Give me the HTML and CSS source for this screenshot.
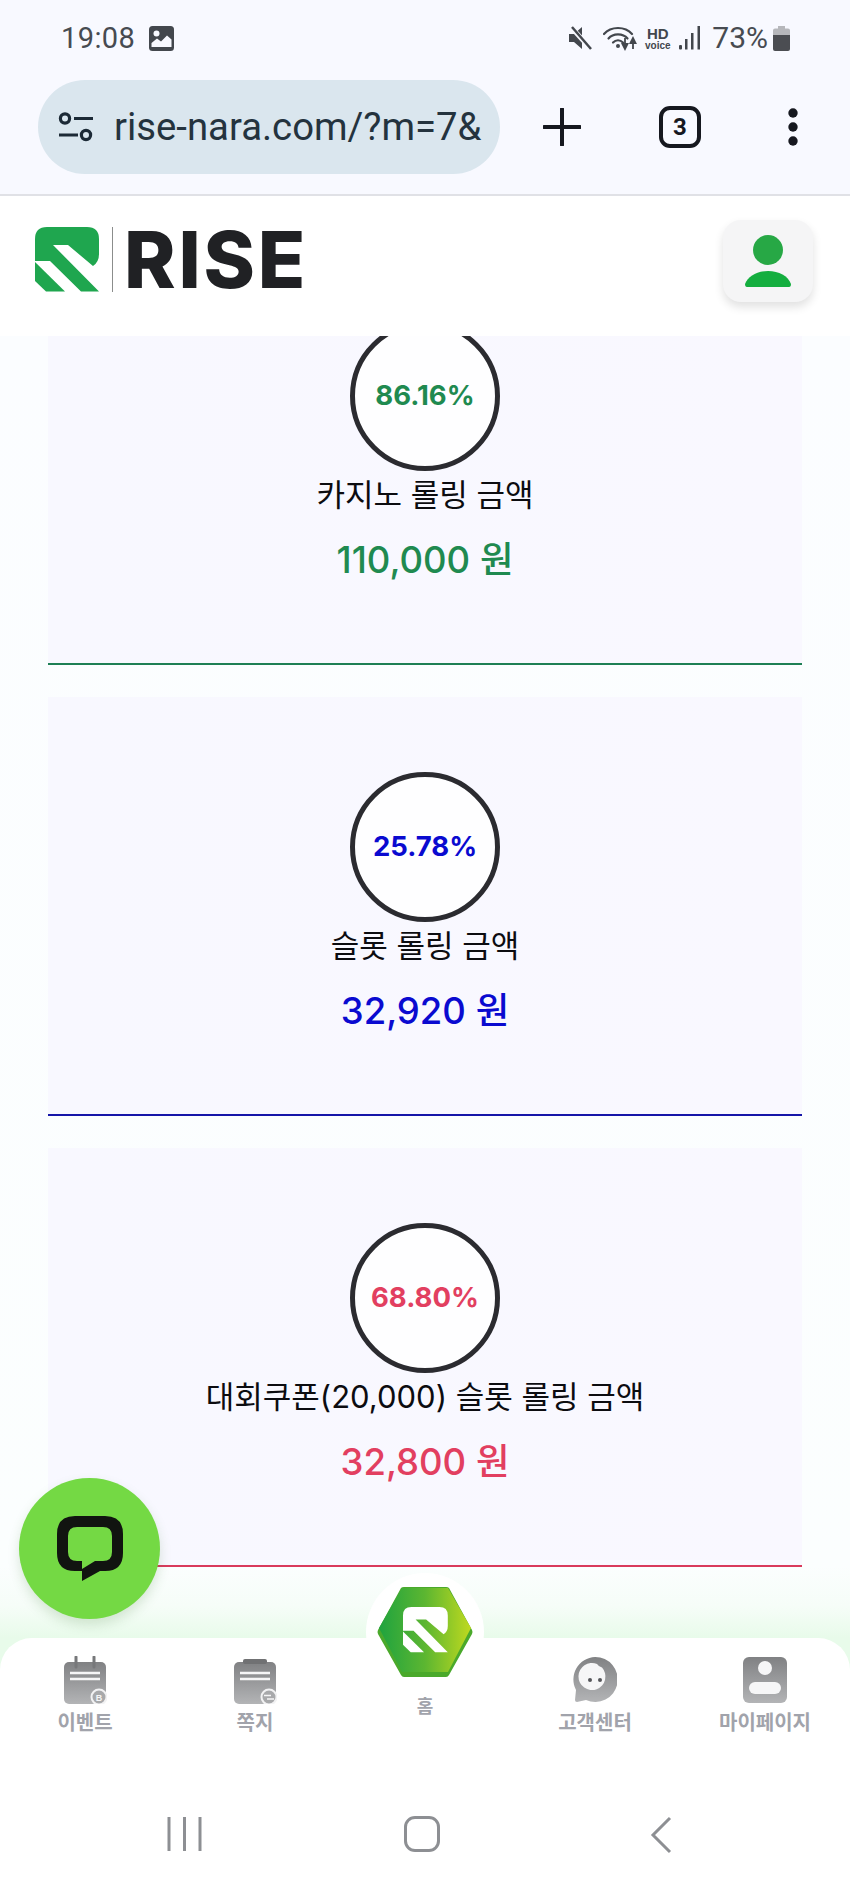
FILE: index.html
```html
<!DOCTYPE html>
<html lang="ko">
<head>
<meta charset="utf-8">
<title>RISE</title>
<link rel="stylesheet" href="styles.css">
</head>
<body>
<div class="page">
  <div class="chrome">
    <div class="status">
      <div class="status-left">
        <span class="time">19:08</span>
        <svg class="ic-image" viewBox="0 0 25 25"><rect width="25" height="25" rx="3.5" fill="#43474d"/><circle cx="7.5" cy="7.5" r="3" fill="#f8f9ff"/><path d="M2.5 21V17L8 12.5l4 3 6-6 4.5 4V21Z" fill="#f8f9ff"/></svg>
      </div>
      <div class="status-right">
        <svg class="ic-mute" viewBox="0 0 24 24"><path d="M1 8h5l8-7v22l-8-7H1Z" fill="#43474d"/><path d="M3 1l20 22" stroke="#f8f9ff" stroke-width="5"/><path d="M4 1l19 22" stroke="#43474d" stroke-width="2.5"/></svg>
        <svg class="ic-wifi" viewBox="0 0 34 25"><g fill="none" stroke="#43474d" stroke-width="2.2" stroke-linecap="round"><path d="M1 8C8 0 22 0 29 8"/><path d="M5.500 12.500C10 7 20 7 24.500 12.500"/><path d="M10 16.500C13 13.500 17 13.500 20 16.500"/></g><circle cx="15" cy="20" r="2" fill="#43474d"/><path d="M22 12v9M19.500 18l2.500 5 2.500-5ZM30 23v-9M27.500 17l2.500-5 2.500 5Z" stroke="#43474d" stroke-width="1.800" fill="#43474d"/></svg>
        <span class="hd"><b>HD</b><i>voice</i></span>
        <svg class="ic-signal" viewBox="0 0 22 24"><g fill="#43474d"><rect x="0" y="19" width="3" height="4.500" rx="1"/><rect x="6" y="13" width="2.500" height="10.500"/><rect x="12" y="7" width="2.500" height="16.500"/><rect x="18.500" y="0" width="2.500" height="23.500"/></g></svg>
        <span class="battery-pct">73%</span>
        <svg class="ic-battery" viewBox="0 0 17 25"><path d="M5 0h7v2.500h3a2 2 0 0 1 2 2V9H0V4.500a2 2 0 0 1 2-2h3Z" fill="#b6b7bb"/><path d="M0 9h17v14a2 2 0 0 1-2 2H2a2 2 0 0 1-2-2Z" fill="#4b4d52"/></svg>
      </div>
    </div>
    <div class="toolbar">
      <div class="url-pill">
        <svg class="ic-tune" viewBox="0 0 36 30"><g fill="none" stroke="#1c2a36" stroke-width="3.200"><circle cx="7" cy="6.500" r="4.600"/><circle cx="28" cy="23" r="4.600"/></g><path d="M16 6.500h19M1 23h19" stroke="#1c2a36" stroke-width="3.200"/></svg>
        <span class="url">rise-nara.com/?m=7&amp;</span>
      </div>
      <svg class="ic-plus" viewBox="0 0 38 38"><path d="M19 1v36M1 19h36" stroke="#16181f" stroke-width="4" stroke-linecap="round"/></svg>
      <div class="tabs">3</div>
      <svg class="ic-dots" viewBox="0 0 10 38"><g fill="#16181f"><circle cx="5" cy="5" r="4.700"/><circle cx="5" cy="19" r="4.700"/><circle cx="5" cy="33" r="4.700"/></g></svg>
    </div>
  </div>

  <header class="site-header">
    <div class="logo">
      <svg class="logo-mark" viewBox="0 0 64 65"><path d="M12 0H52Q64 0 64 12V27Q64 35 58 39L33 18H18L64 64.500H46L15 34H0V12Q0 0 12 0Z" fill="#1fa64f"/><path d="M0 35L30 64.500H11L0 54Z" fill="#1fa64f"/></svg>
      <span class="logo-sep"></span>
      <span class="logo-word">RISE</span>
    </div>
    <button class="user-btn" type="button" aria-label="내 정보">
      <svg viewBox="0 0 46 52"><circle cx="23" cy="15" r="15" fill="#27a845"/><path d="M0 49C3 41 12 36 23 36S43 41 46 49Q46 52 44 52H2Q0 52 0 49Z" fill="#14ae3f"/></svg>
    </button>
  </header>

  <main class="content">
    <section class="card card-green">
      <div class="ring">86.16%</div>
      <p class="label">카지노 롤링 금액</p>
      <p class="amount">110,000 원</p>
    </section>
    <section class="card card-blue">
      <div class="ring">25.78%</div>
      <p class="label">슬롯 롤링 금액</p>
      <p class="amount">32,920 원</p>
    </section>
    <section class="card card-red">
      <div class="ring">68.80%</div>
      <p class="label">대회쿠폰(20,000) 슬롯 롤링 금액</p>
      <p class="amount">32,800 원</p>
    </section>
  </main>

  <button class="chat-fab" type="button" aria-label="채팅">
    <svg viewBox="0 0 66 66"><path fill-rule="evenodd" d="M18 0H48Q66 0 66 18V37Q66 55 48 55H43L25 65V55H18Q0 55 0 37V18Q0 0 18 0ZM20 11Q11 11 11 20V36Q11 45 20 45H25V53L38 45H46Q55 45 55 36V20Q55 11 46 11Z" fill="#111410"/></svg>
  </button>

  <nav class="bottom-nav">
    <div class="nav-items">
      <a class="nav-item">
        <svg class="nav-icon" viewBox="0 0 44 48"><defs><linearGradient id="g1" x1="0" y1="0" x2="0" y2="1"><stop offset="0" stop-color="#808183"/><stop offset="1" stop-color="#b3b4b6"/></linearGradient></defs><rect x="1" y="6" width="42" height="42" rx="5" fill="url(#g1)"/><path d="M13 1v10M31 1v10" stroke="#77787a" stroke-width="3" stroke-linecap="round"/><path d="M7 17h30M7 23h30" stroke="#f6f6f7" stroke-width="2.500"/><circle cx="36" cy="41" r="7.500" fill="#a8a9ab" stroke="#f2f2f3" stroke-width="2"/><text class="badge-b" x="36" y="44.500" text-anchor="middle">B</text></svg>
        <span>이벤트</span>
      </a>
      <a class="nav-item">
        <svg class="nav-icon" viewBox="0 0 44 48"><rect x="1" y="6" width="42" height="42" rx="5" fill="url(#g1)"/><rect x="10" y="3" width="24" height="5" rx="2" fill="#707173"/><path d="M7 17h30M7 23h30" stroke="#f6f6f7" stroke-width="2.500"/><circle cx="36" cy="41" r="7.500" fill="#a8a9ab" stroke="#f2f2f3" stroke-width="2"/><path d="M31 39.500h7M34 43h7" stroke="#f6f6f7" stroke-width="1.500"/></svg>
        <span>쪽지</span>
      </a>
      <a class="nav-item nav-home">
        <span>홈</span>
      </a>
      <a class="nav-item">
        <svg class="nav-icon" viewBox="0 0 44 48"><path d="M22 1a22.500 22.500 0 1 1-9 43L4 46Q2 46 2 44L3 34A22.500 22.500 0 0 1 22 1Z" fill="url(#g1)"/><path d="M24 8q2 3 5 3.500a13.500 13.500 0 1 1-5-3.500Z" fill="#f6f6f7"/><circle cx="17" cy="24" r="2" fill="#55565a"/><circle cx="27" cy="24" r="2" fill="#55565a"/></svg>
        <span>고객센터</span>
      </a>
      <a class="nav-item">
        <svg class="nav-icon" viewBox="0 0 44 48"><rect y="1" width="44" height="46" rx="6" fill="url(#g1)"/><circle cx="22" cy="12" r="7" fill="#f6f6f7"/><rect x="6" y="26" width="32" height="12" rx="6" fill="#f6f6f7"/></svg>
        <span>마이페이지</span>
      </a>
    </div>
    <div class="sys-nav">
      <svg class="ic-recents" viewBox="0 0 35 36"><path d="M2 1v34M17.500 1v34M33 1v34" stroke="#8d8f93" stroke-width="3"/></svg>
      <span class="sys-home"></span>
      <svg class="ic-back" viewBox="0 0 22 38"><path d="M20 2L3 19l17 17" fill="none" stroke="#8d8f93" stroke-width="3"/></svg>
    </div>
  </nav>

  <a class="home-fab">
    <svg viewBox="0 0 96 90"><defs><linearGradient id="hex" x1="0" y1="0" x2="1" y2="0"><stop offset="0" stop-color="#1fa33f"/><stop offset=".5" stop-color="#5cb631"/><stop offset="1" stop-color="#bfd91f"/></linearGradient></defs><path d="M1 43L24 1Q25 0 27 0H69Q71 0 72 1L95 43Q96 45 95 47L72 88Q71 90 69 90H27Q25 90 24 88L1 47Q0 45 1 43Z" fill="#4aa92b"/><path d="M2 41L25 1H71L94 41L71 85H25Z" fill="url(#hex)"/><g transform="translate(26 20) scale(.7)" fill="#fff"><path d="M12 0H52Q64 0 64 12V27Q64 35 58 39L33 18H18L64 64.500H46L15 34H0V12Q0 0 12 0Z"/><path d="M0 35L30 64.500H11L0 54Z"/></g></svg>
  </a>
</div>
</body>
</html>
```
FILE: styles.css
```css
* { box-sizing: border-box; }
html, body { margin: 0; padding: 0; }
body { font-family: "Inter", "Noto Sans CJK KR", sans-serif; background: #fff; }
p { margin: 0; }
button { border: 0; padding: 0; cursor: pointer; }

.page {
  position: relative;
  width: 850px;
  height: 1889px;
  overflow: hidden;
  display: flex;
  flex-direction: column;
  background: #e8fbea;
}

/* browser chrome */
.chrome {
  height: 196px;
  flex: none;
  background: #f8f9ff;
  border-bottom: 2px solid #e0e1e6;
}
.status {
  height: 76px;
  padding: 0 60px 0 61px;
  display: flex;
  align-items: center;
  justify-content: space-between;
}
.status-left, .status-right { display: flex; align-items: center; }
.time {
  font: 400 29px/1 "Roboto", sans-serif;
  color: #474b51;
  letter-spacing: 0.4px;
}
.ic-image { width: 25px; height: 25px; margin-left: 14px; }
.ic-mute { width: 24px; height: 24px; }
.ic-wifi { width: 34px; height: 25px; margin-left: 11px; }
.hd {
  display: flex;
  flex-direction: column;
  align-items: center;
  margin-left: 7px;
  width: 27px;
  color: #43474d;
  font-family: "Liberation Sans", sans-serif;
}
.hd b { font-size: 15px; line-height: 14px; font-weight: 700; }
.hd i { font-size: 10px; line-height: 9px; font-style: normal; font-weight: 700; }
.ic-signal { width: 22px; height: 24px; margin-left: 8px; }
.battery-pct {
  font: 400 30px/1 "Roboto", sans-serif;
  color: #474b51;
  margin-left: 11px;
}
.ic-battery { width: 17px; height: 25px; margin-left: 5px; }

.toolbar {
  height: 118px;
  padding: 0 0 16px 38px;
  display: flex;
  align-items: center;
}
.url-pill {
  width: 462px;
  height: 94px;
  flex: none;
  border-radius: 47px;
  background: #dae6ee;
  display: flex;
  align-items: center;
  padding-left: 20px;
  overflow: hidden;
}
.ic-tune { width: 36px; height: 30px; flex: none; }
.url {
  margin-left: 20px;
  font: 400 38.3px/1 "Roboto", sans-serif;
  color: #24333e;
  white-space: nowrap;
}
.ic-plus { width: 38px; height: 38px; margin-left: 43px; flex: none; }
.tabs {
  width: 42px;
  height: 42px;
  margin-left: 78px;
  flex: none;
  border: 4px solid #16181f;
  border-radius: 11px;
  display: flex;
  align-items: center;
  justify-content: center;
  font: 700 24px/1 "Roboto", sans-serif;
  color: #16181f;
}
.ic-dots { width: 10px; height: 38px; margin-left: 87px; flex: none; }

/* site header */
.site-header {
  height: 140px;
  flex: none;
  background: #fff;
  padding: 24px 37px 0 35px;
  display: flex;
  justify-content: space-between;
  align-items: flex-start;
}
.logo { display: flex; align-items: center; margin-top: 7px; }
.logo-mark { width: 64px; height: 65px; flex: none; }
.logo-sep { width: 1px; height: 65px; margin-left: 13px; background: #8b8d8c; }
.logo-word {
  margin-left: 11px;
  font: 800 78px/65px "Inter", sans-serif;
  color: #202124;
  letter-spacing: 2.8px;
}
.user-btn {
  width: 90px;
  height: 82px;
  border-radius: 18px;
  background: #f5f5f6;
  box-shadow: 0 5px 10px rgba(0,0,0,.12);
  display: flex;
  align-items: center;
  justify-content: center;
}
.user-btn svg { width: 46px; height: 52px; }

/* cards */
.content {
  flex: 1;
  min-height: 0;
  overflow: hidden;
  padding: 0 48px;
  display: flex;
  flex-direction: column;
  gap: 32px;
  background: linear-gradient(to bottom, #fbfdff 0, #fbfefe 1230px, #f6fdf8 1270px, #e8fbea 100%);
}
.card {
  flex: none;
  height: 419px;
  padding-top: 75px;
  display: flex;
  flex-direction: column;
  align-items: center;
  background: linear-gradient(to right, #f8f8ff, #f9f8ff);
  border-bottom: 2px solid;
}
.card:first-child { margin-top: -90px; }
.ring {
  width: 150px;
  height: 150px;
  flex: none;
  border-radius: 50%;
  border: 5px solid #2b2b30;
  background: #fefeff;
  display: flex;
  align-items: center;
  justify-content: center;
  font: 700 27.5px/1 "Inter", sans-serif;
}
.label {
  margin-top: 3px;
  font: 400 31px/42px "Inter", "Noto Sans CJK KR", sans-serif;
  color: #0c0c10;
  white-space: nowrap;
}
.amount {
  margin-top: 20px;
  font: 500 36.5px/48px "Inter", "Noto Sans CJK KR", sans-serif;
  white-space: nowrap;
}
.card-green .ring, .card-green .amount { color: #1f8a50; }
.card-green { border-color: #1e7f55; }
.card-blue .ring, .card-blue .amount { color: #0a0ad0; }
.card-blue { border-color: #1515a8; }
.card-red .ring, .card-red .amount { color: #e23f60; }
.card-red { border-color: #d93a5c; }

/* floating */
.chat-fab {
  position: absolute;
  left: 19px;
  top: 1478px;
  width: 141px;
  height: 141px;
  border-radius: 50%;
  background: #74d944;
  box-shadow: 0 6px 12px rgba(60,120,50,.18);
  display: flex;
  align-items: center;
  justify-content: center;
  z-index: 3;
}
.chat-fab svg { width: 66px; height: 66px; }

.home-fab {
  position: absolute;
  left: 366px;
  top: 1573px;
  width: 118px;
  height: 118px;
  border-radius: 50%;
  background: #fff;
  display: flex;
  align-items: center;
  justify-content: center;
  z-index: 2;
}
.home-fab svg { width: 96px; height: 90px; }

/* bottom nav */
.bottom-nav {
  height: 251px;
  flex: none;
  background: #fff;
  border-radius: 32px 32px 0 0;
  position: relative;
  z-index: 1;
}
.nav-items {
  display: grid;
  grid-template-columns: repeat(5, 170px);
  padding-top: 18px;
  height: 168px;
}
.nav-item {
  display: flex;
  flex-direction: column;
  align-items: center;
  gap: 3px;
  font: 700 20px/30px "Noto Sans CJK KR", sans-serif;
  color: #a1a3ab;
  white-space: nowrap;
}
.nav-icon { width: 44px; height: 48px; flex: none; }
.nav-home { padding-top: 34px; font-size: 18px; }
.badge-b { font: 700 9px "Liberation Sans", sans-serif; fill: #f6f6f7; }
.sys-nav {
  height: 83px;
  display: flex;
  align-items: flex-start;
  padding-top: 10px;
}
.ic-recents { width: 35px; height: 36px; margin-left: 167px; flex: none; }
.sys-home {
  width: 36px;
  height: 36px;
  margin-left: 202px;
  flex: none;
  border: 3px solid #8d8f93;
  border-radius: 11px;
}
.ic-back { width: 22px; height: 38px; margin-left: 210px; flex: none; }
```
